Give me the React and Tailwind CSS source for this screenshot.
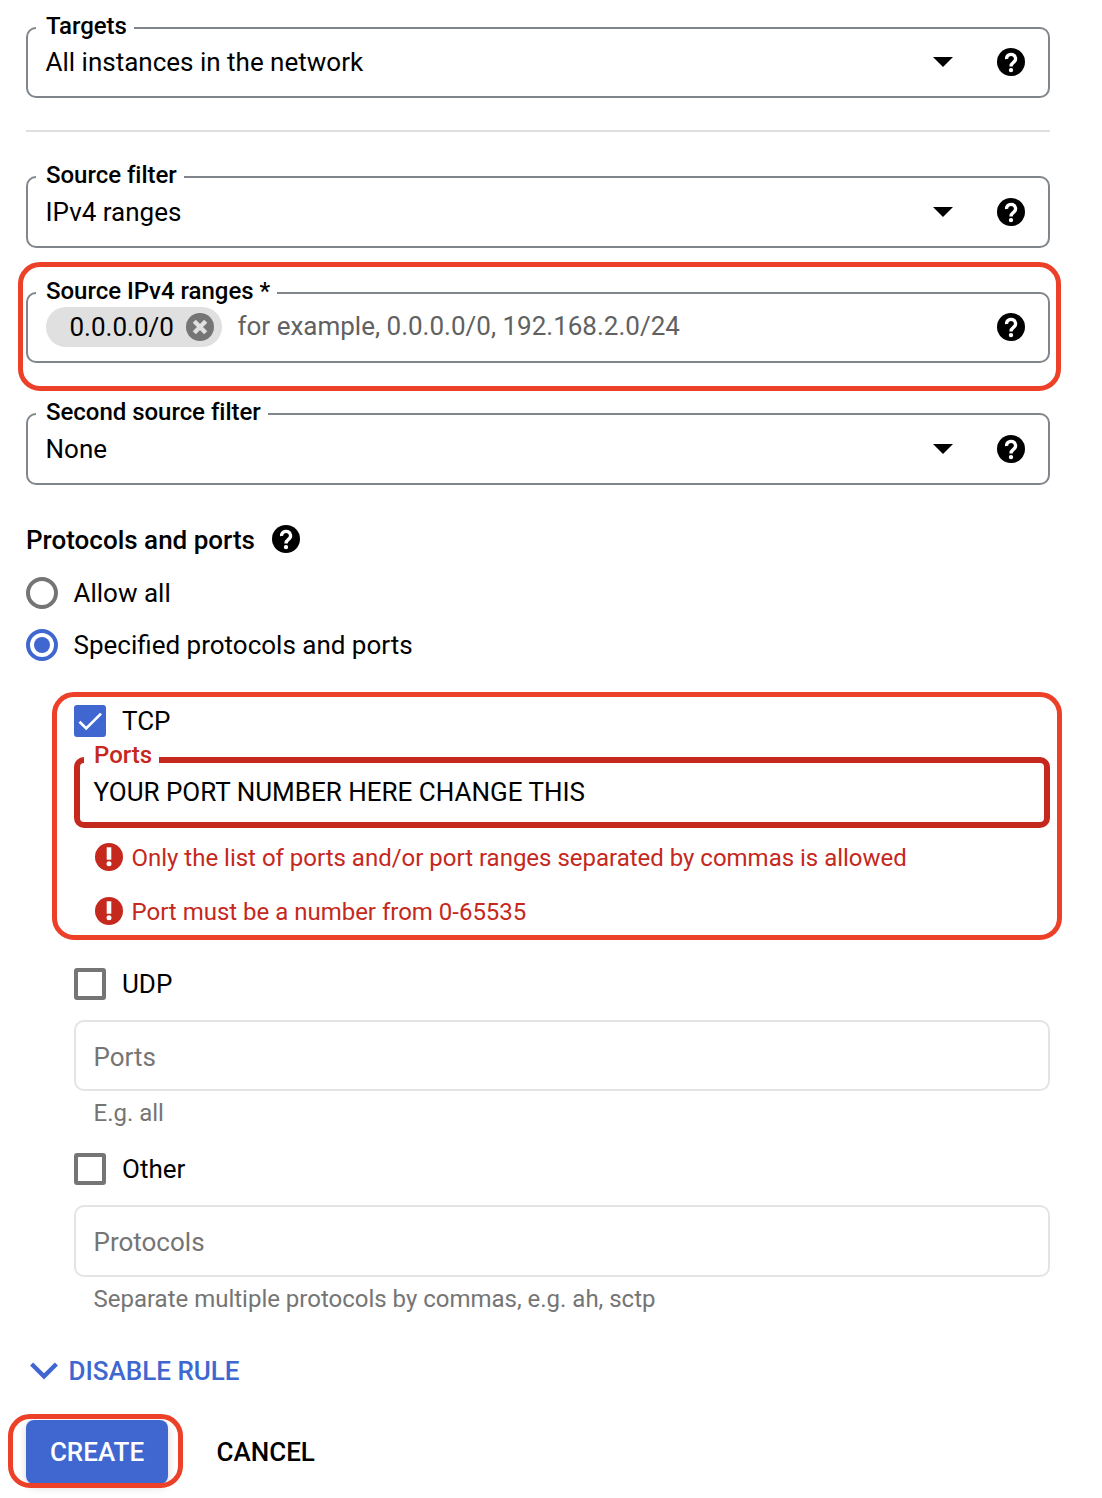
import React from "react";

function HelpIcon({ className = "" }) {
  return (
    <svg viewBox="0 0 28 28" className={`h-7 w-7 shrink-0 ${className}`}>
      <circle cx="14" cy="14" r="14" />
      <path d="M9.6 11a4.5 4.3 0 1 1 7.4 2.9c-1.6 1.3-3 2-3 4.6" fill="none" stroke="#fff" strokeWidth="3.3" />
      <circle cx="14" cy="22.1" r="2.2" fill="#fff" />
    </svg>
  );
}

function ErrorIcon() {
  return (
    <svg viewBox="0 0 28 28" className="h-7 w-7 shrink-0">
      <circle cx="14" cy="14" r="14" fill="#c5281c" />
      <rect x="11.7" y="4.3" width="4.6" height="12.4" fill="#fff" />
      <circle cx="14" cy="20.8" r="2.5" fill="#fff" />
    </svg>
  );
}

function Caret() {
  return (
    <svg viewBox="0 0 20 10" className="h-[10px] w-5 shrink-0">
      <path d="M0 0h20L10 10z" />
    </svg>
  );
}

function Highlight({ className }) {
  return <div className={`pointer-events-none absolute border-[5px] border-[#ec4128] ${className}`} />;
}

function Field({ label, className, children }) {
  return (
    <div className={`relative flex items-center rounded-[10px] border-2 border-[#80868b] pr-[23px] pl-[17.5px] ${className}`}>
      <span className="absolute -top-[17px] left-2 bg-white pr-[7px] pl-[10px] text-2xl leading-[28px] font-medium whitespace-nowrap tracking-[-0.03px]">
        {label}
      </span>
      {children}
    </div>
  );
}

function SelectField({ label, value, className }) {
  return (
    <Field label={label} className={className}>
      <span className="flex-1">{value}</span>
      <Caret />
      <HelpIcon className="ml-11" />
    </Field>
  );
}

function Check({ label, checked, className = "" }) {
  return (
    <label className={`flex h-8 items-center gap-4 ${className}`}>
      {checked ? (
        <span className="flex h-8 w-8 items-center justify-center rounded-[3px] bg-[#4067d0]">
          <svg viewBox="0 0 32 32" className="h-8 w-8 fill-none stroke-white stroke-[2.7]">
            <path d="M5.5 16.8 12.2 23.4 27 8.6" />
          </svg>
        </span>
      ) : (
        <span className="h-8 w-8 rounded-[3px] border-4 border-[#757575]" />
      )}
      <span>{label}</span>
    </label>
  );
}

function Radio({ label, checked, className }) {
  return (
    <label className={`flex h-8 items-center gap-[15.5px] ${className}`}>
      <span className={`flex h-8 w-8 items-center justify-center rounded-full border-4 ${checked ? "border-[#4067d0]" : "border-[#757575]"}`}>
        {checked && <span className="h-4 w-4 rounded-full bg-[#4067d0]" />}
      </span>
      <span>{label}</span>
    </label>
  );
}

function ErrorLine({ children, className }) {
  return (
    <div className={`ml-[21px] flex h-7 items-center gap-[8.5px] text-2xl tracking-[-0.01px] text-[#c5281c] ${className}`}>
      <ErrorIcon />
      <span className="pt-0.5 leading-[28px]">{children}</span>
    </div>
  );
}

export default function App() {
  return (
    <main className="h-[1498px] w-[1102px] overflow-hidden bg-white pt-[27px] pl-[26px] font-[Roboto,sans-serif] text-[26px] leading-8 text-black">
      <div className="flex w-[1024px] flex-col">
        <SelectField label="Targets" value="All instances in the network" className="h-[71px] pb-px" />
        <hr className="mt-8 border-t-2 border-[#dfdfdf]" />
        <SelectField label="Source filter" value="IPv4 ranges" className="mt-11 h-[72px]" />

        <section className="relative mt-11">
          <Field label="Source IPv4 ranges *" className="h-[71px] pb-px">
            <span className="flex h-10 w-44 items-center rounded-full bg-[#e0e0e0] pr-2 pl-6">
              <span className="flex-1">0.0.0.0/0</span>
              <svg viewBox="0 0 28 28" className="h-7 w-7">
                <circle cx="14" cy="14" r="14" fill="#757575" />
                <path d="m8.3 8.3 11.4 11.4m0-11.4-11.4 11.4" stroke="#e0e0e0" strokeWidth="4.4" />
              </svg>
            </span>
            <span className="ml-4 flex-1 pb-0.5 text-[#616161]">for example, 0.0.0.0/0, 192.168.2.0/24</span>
            <HelpIcon />
          </Field>
          <Highlight className="-top-[30px] -right-[11px] -bottom-7 -left-2 rounded-[22px]" />
        </section>

        <SelectField label="Second source filter" value="None" className="mt-[50px] h-[72px]" />

        <div className="mt-10 flex h-7 items-center">
          <h2 className="w-[246px] pt-0.5 font-medium">Protocols and ports</h2>
          <HelpIcon />
        </div>
        <Radio label="Allow all" className="mt-6" />
        <Radio label="Specified protocols and ports" checked className="mt-5" />

        <div className="ml-12 flex flex-col">
          <section className="relative mt-11">
            <Check label="TCP" checked />
            <div className="relative mt-5 flex h-[71px] items-center rounded-[10px] border-[6px] border-[#c5281c] pb-px pl-[13.5px]">
              <span className="absolute -top-[22px] left-1 bg-white pr-[7px] pl-[10px] text-2xl leading-[28px] font-medium text-[#c5281c]">Ports</span>
              <span>YOUR PORT NUMBER HERE CHANGE THIS</span>
            </div>
            <ErrorLine className="mt-[15px]">Only the list of ports and/or port ranges separated by commas is allowed</ErrorLine>
            <ErrorLine className="mt-[26px]">Port must be a number from 0-65535</ErrorLine>
            <Highlight className="-top-[13px] -right-3 -bottom-[15px] -left-[22px] rounded-[22px]" />
          </section>

          <Check label="UDP" className="mt-[43px]" />
          <div className="mt-5 flex h-[71px] items-center rounded-[10px] border-2 border-[#e4e4e4] pt-0.5 pl-[17.5px] text-[#757575]">Ports</div>
          <p className="mt-2 ml-[19.5px] h-7 text-2xl leading-[28px] text-[#757575]">E.g. all</p>

          <Check label="Other" className="mt-[26px]" />
          <div className="mt-5 flex h-[72px] items-center rounded-[10px] border-2 border-[#e4e4e4] pt-0.5 pl-[17.5px] text-[#757575]">Protocols</div>
          <p className="mt-2 ml-[19.5px] h-7 text-2xl leading-[28px] tracking-[-0.01px] text-[#757575]">Separate multiple protocols by commas, e.g. ah, sctp</p>
        </div>

        <button className="mt-[42px] flex h-8 items-center self-start pl-1 font-medium text-[#4067d0]">
          <svg viewBox="0 0 28 18" className="mr-[10.5px] h-[18px] w-7 fill-none stroke-[#4067d0] stroke-[4.4]">
            <path d="M1.6 2 14 14.3 26.4 2" />
          </svg>
          DISABLE RULE
        </button>

        <div className="mt-[33px] flex h-16 items-center">
          <div className="relative">
            <button className="block h-16 w-[142px] rounded-lg bg-[#4067d0] font-medium text-white shadow-[0_3px_8px_rgba(0,0,0,0.16)]">CREATE</button>
            <Highlight className="-top-1.5 -right-[15px] -bottom-1 -left-[18px] rounded-[22px]" />
          </div>
          <button className="ml-[48.5px] font-medium">CANCEL</button>
        </div>
      </div>
    </main>
  );
}
